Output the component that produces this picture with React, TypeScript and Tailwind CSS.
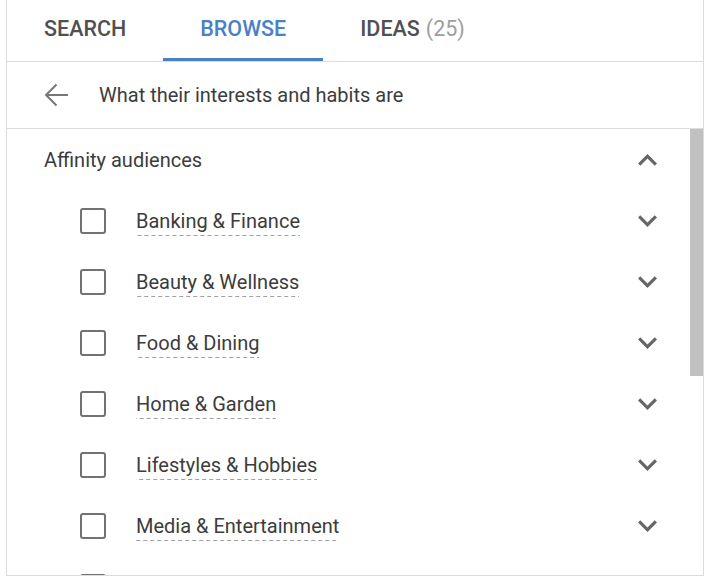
import React from "react";

const items = [
  "Banking & Finance",
  "Beauty & Wellness",
  "Food & Dining",
  "Home & Garden",
  "Lifestyles & Hobbies",
  "Media & Entertainment",
];

function ChevronDown() {
  return (
    <svg width="19" height="12" viewBox="6 8.4 12 7.6" className="block">
      <path d="M16.59 8.59L12 13.17 7.41 8.59 6 10l6 6 6-6z" fill="#666" />
    </svg>
  );
}

function ChevronUp() {
  return (
    <svg width="19" height="12" viewBox="6 8 12 7.6" className="block">
      <path d="M12 8l-6 6 1.41 1.41L12 10.83l4.59 4.58L18 14z" fill="#666" />
    </svg>
  );
}

export default function App() {
  return (
    <div
      className="w-[709px] h-[576px] bg-white overflow-hidden text-[#3c3c3c]"
      style={{ fontFamily: "Roboto, 'Liberation Sans', sans-serif" }}
    >
      <div className="ml-[6px] w-[698px] h-[576px] border-x border-b border-[#dcdcdc] flex flex-col">
        <div className="h-[62px] border-b border-[#dcdcdc] flex items-stretch shrink-0">
          <div className="px-[37px] flex items-center pb-[3px] text-[21.5px] font-medium text-[#505050]">
            SEARCH
          </div>
          <div className="px-[37px] flex items-center text-[21.5px] font-medium text-[#4a80c6] border-b-[3px] border-[#4a80c6]">
            BROWSE
          </div>
          <div className="px-[37px] flex items-center pb-[3px] text-[21.5px] font-medium text-[#505050]">
            IDEAS<span className="ml-[6px] font-normal text-[#9e9e9e]">(25)</span>
          </div>
        </div>
        <div className="h-[67px] border-b border-[#dcdcdc] flex items-center pl-[37px] shrink-0">
          <svg width="25" height="24" viewBox="0 0 25 24" className="block">
            <path d="M24 12H2M12.5 1.5L2 12l10.5 10.5" fill="none" stroke="#777" strokeWidth="2" />
          </svg>
          <span className="ml-[30px] text-[20px]">What their interests and habits are</span>
        </div>
        <div className="flex flex-1 overflow-hidden">
          <div className="flex-1 flex flex-col">
            <div className="h-[61px] shrink-0 flex items-center justify-between pl-[37px] pr-[33px]">
              <span className="text-[20px]">Affinity audiences</span>
              <ChevronUp />
            </div>
            {items.map((t) => (
              <div key={t} className="h-[61px] shrink-0 flex items-center pl-[73px] pr-[33px]">
                <div className="w-[26px] h-[26px] border-[2.5px] border-[#727272] rounded-[3px] shrink-0" />
                <span className="ml-[30px] text-[20px] bg-[linear-gradient(to_right,#a0a0a0_60%,transparent_0)] bg-[length:7px_1px] bg-repeat-x bg-bottom">
                  {t}
                </span>
                <div className="flex-1" />
                <ChevronDown />
              </div>
            ))}
            <div className="h-[61px] shrink-0 flex items-center pl-[73px]">
              <div className="w-[26px] h-[26px] border-[2.5px] border-[#727272] rounded-[3px] shrink-0" />
            </div>
          </div>
          <div className="w-[13px] shrink-0">
            <div className="h-[247px] bg-[#c1c1c1]" />
          </div>
        </div>
      </div>
    </div>
  );
}
